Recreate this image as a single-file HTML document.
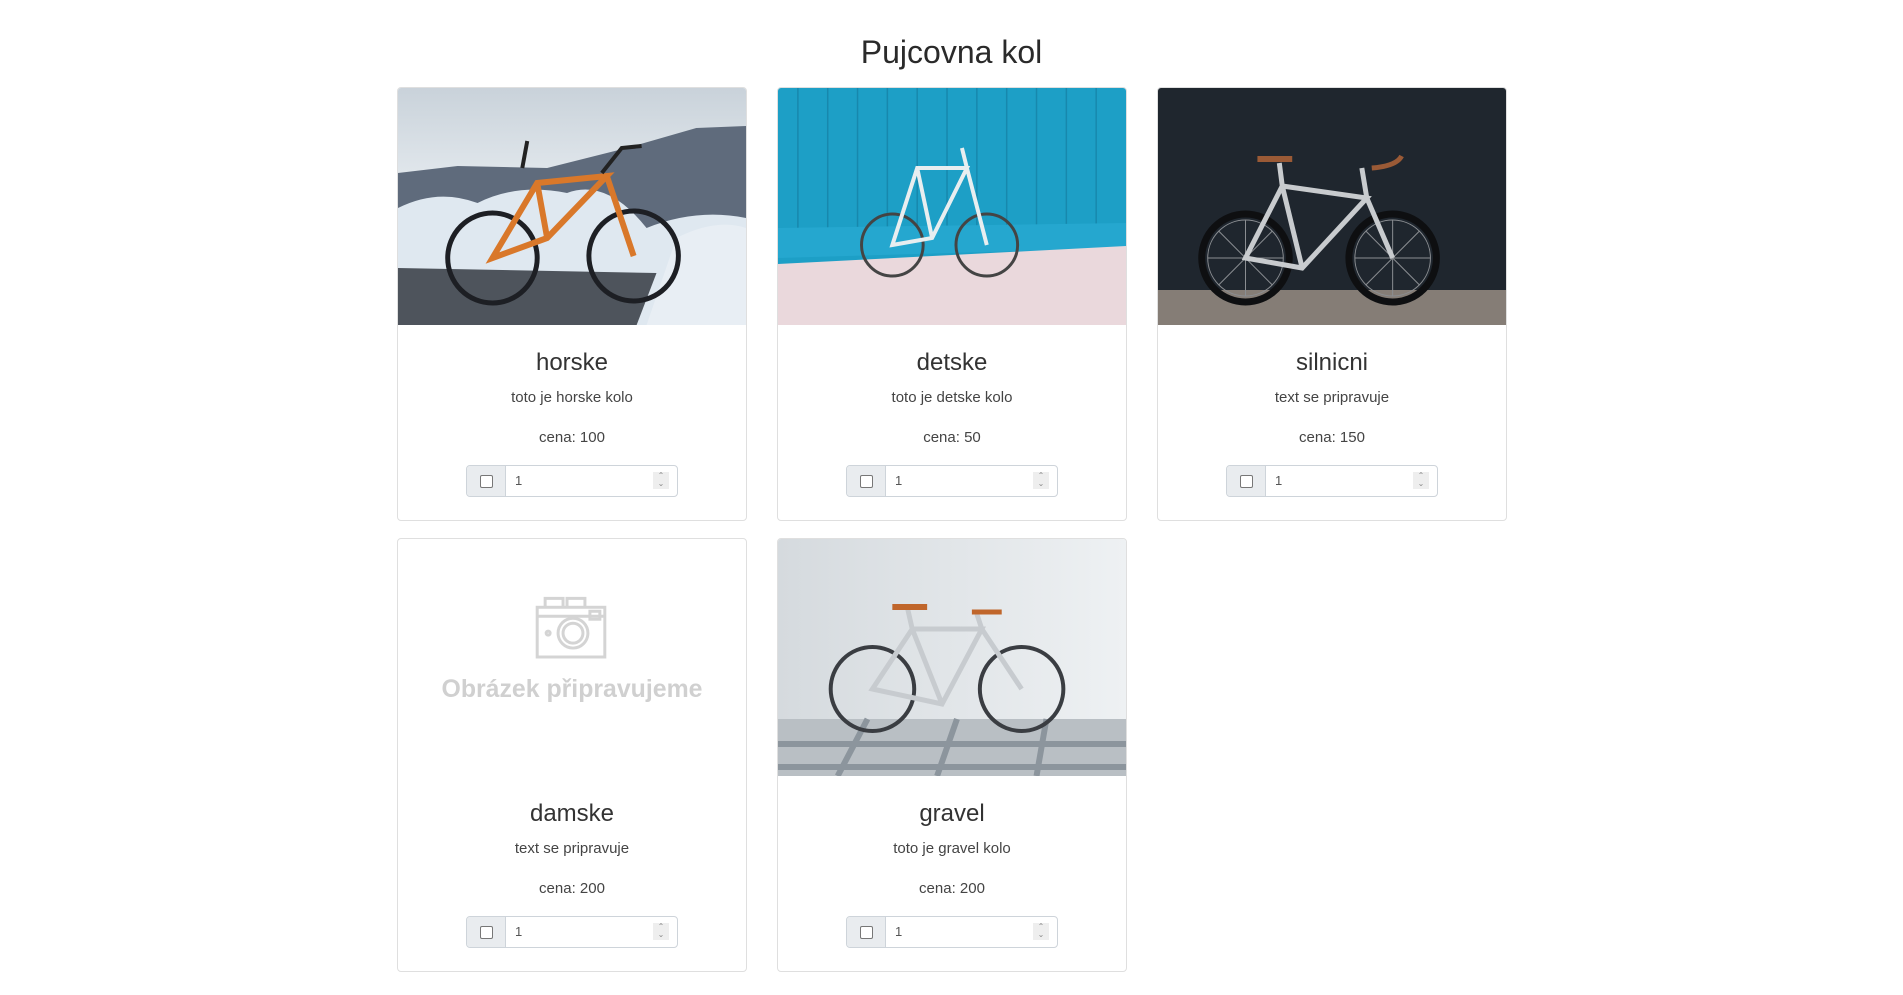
<!DOCTYPE html>
<html><head><meta charset="utf-8"><style>
*{box-sizing:border-box;margin:0;padding:0}
body{width:1903px;height:995px;background:#fff;font-family:"Liberation Sans",sans-serif;color:#212529;position:relative;overflow:hidden}
h1{position:absolute;left:0;width:1903px;top:31px;text-align:center;font-weight:400;font-size:32px;line-height:42px;color:#2a2a2a}
.card{position:absolute;width:350px;height:434px;border:1px solid #dfdfdf;border-radius:4px;overflow:hidden;background:#fff}
.img{position:absolute;left:0;top:0;width:348px;height:237px;display:block}
.nm{position:absolute;left:0;right:0;top:259px;text-align:center;font-size:24px;line-height:32px;color:#333}
.ds{position:absolute;left:0;right:0;top:300px;text-align:center;font-size:15px;line-height:20px;color:#444}
.pr{position:absolute;left:0;right:0;top:340px;text-align:center;font-size:15px;line-height:20px;color:#444}
.ig{position:absolute;left:68px;top:377px;width:212px;height:32px;border:1px solid #ced4da;border-radius:4px;overflow:hidden}
.pp{position:absolute;left:0;top:0;width:39px;height:30px;background:#e9ecef;border-right:1px solid #ced4da}
.pp i{position:absolute;left:13px;top:9px;width:13px;height:13px;border:1.5px solid #777;border-radius:2px;background:#fff}
.v{position:absolute;left:48px;top:7px;font-size:13px;color:#555}
.sp{position:absolute;right:8px;top:6px;width:16px;height:17px;background:#eee;font-size:8px;line-height:8px;text-align:center;color:#888}
</style></head><body>
<h1>Pujcovna kol</h1>

<div class="card" style="left:397px;top:87px">
<svg class="img" viewBox="0 0 350 237" preserveAspectRatio="none">
<defs><linearGradient id="s1" x1="0" y1="0" x2="0" y2="1"><stop offset="0" stop-color="#c9d2da"/><stop offset=".5" stop-color="#e9eef2"/><stop offset="1" stop-color="#aab6c2"/></linearGradient></defs>
<rect width="350" height="237" fill="url(#s1)"/>
<path d="M0 85 L60 78 L150 80 L230 60 L300 40 L350 38 L350 150 L0 150Z" fill="#5f6b7c"/>
<path d="M0 120 Q40 100 80 115 Q120 95 170 105 Q210 90 250 140 Q300 120 350 130 L350 237 L0 237Z" fill="#dfe8f0"/>
<path d="M0 180 L260 185 L240 237 L0 237Z" fill="#4e545c"/>
<path d="M280 150 Q320 130 350 140 L350 237 L250 237Z" fill="#e8eef4"/>
<g fill="none" stroke="#1d1f24" stroke-width="5"><circle cx="95" cy="170" r="45"/><circle cx="237" cy="168" r="45"/></g>
<g fill="none" stroke="#d9782a" stroke-width="6"><path d="M95 170 L150 150 L210 88 L140 95 Z M140 95 L150 150 M210 88 L237 168"/></g>
<path d="M130 53 L125 80" stroke="#222" stroke-width="4"/><path d="M205 85 L225 60 L245 58" stroke="#222" stroke-width="4" fill="none"/>
</svg>
<div class="nm">horske</div><div class="ds">toto je horske kolo</div><div class="pr">cena: 100</div>
<div class="ig"><div class="pp"><i></i></div><span class="v">1</span><div class="sp">⌃<br>⌄</div></div>
</div>

<div class="card" style="left:777px;top:87px">
<svg class="img" viewBox="0 0 350 237" preserveAspectRatio="none">
<rect width="350" height="237" fill="#1d9fc6"/>
<g stroke="#1788ad" stroke-width="1.5"><path d="M20 0V160M50 0V160M80 0V160M110 0V160M140 0V160M170 0V160M200 0V160M230 0V160M260 0V160M290 0V160M320 0V160"/></g>
<path d="M0 140 L350 135 L350 160 L0 170Z" fill="#25a7cf"/>
<path d="M0 176 L350 158 L350 237 L0 237Z" fill="#ead8dc"/>
<g fill="none" stroke="#444" stroke-width="3"><circle cx="115" cy="157" r="31"/><circle cx="210" cy="157" r="31"/></g>
<g fill="none" stroke="#e8eef0" stroke-width="4"><path d="M115 157 L155 150 L190 80 L140 80 Z M140 80 L155 150 M190 80 L210 157 M190 80 L185 60"/></g>
</svg>
<div class="nm">detske</div><div class="ds">toto je detske kolo</div><div class="pr">cena: 50</div>
<div class="ig"><div class="pp"><i></i></div><span class="v">1</span><div class="sp">⌃<br>⌄</div></div>
</div>

<div class="card" style="left:1157px;top:87px">
<svg class="img" viewBox="0 0 350 237" preserveAspectRatio="none">
<rect width="350" height="237" fill="#1f262e"/>
<rect y="202" width="350" height="35" fill="#857d76"/>
<g fill="none" stroke="#0e0f11" stroke-width="7"><circle cx="88" cy="170" r="44"/><circle cx="236" cy="170" r="44"/></g>
<g fill="none" stroke="#8b8e92" stroke-width="1"><circle cx="88" cy="170" r="38"/><circle cx="236" cy="170" r="38"/><path d="M50 170H126M88 132V208M61 143L115 197M115 143L61 197M198 170H274M236 132V208M209 143L263 197M263 143L209 197"/></g>
<g fill="none" stroke="#c8cbce" stroke-width="5"><path d="M88 170 L145 180 L210 110 L125 98 Z M125 98 L145 180 M210 110 L236 170 M122 75 L125 98 M205 80 L210 110"/></g>
<path d="M100 71 H135" stroke="#9a5a36" stroke-width="6"/><path d="M215 80 Q240 78 245 68" stroke="#9a5a36" stroke-width="5" fill="none"/>
</svg>
<div class="nm">silnicni</div><div class="ds">text se pripravuje</div><div class="pr">cena: 150</div>
<div class="ig"><div class="pp"><i></i></div><span class="v">1</span><div class="sp">⌃<br>⌄</div></div>
</div>

<div class="card" style="left:397px;top:538px">
<svg class="img" viewBox="0 0 350 237">
<g fill="none" stroke="#d4d4d4" stroke-width="3"><rect x="140" y="68" width="68" height="50"/><path d="M140 77H208M148 68V59H166V68M170 68V59H188V68"/><circle cx="176" cy="94" r="15"/><circle cx="176" cy="94" r="10"/><rect x="193" y="72" width="10" height="8"/><circle cx="151" cy="94" r="2"/></g>
<text x="175" y="158" text-anchor="middle" font-family="Liberation Sans,sans-serif" font-weight="bold" font-size="25" fill="#d0d0d0">Obrázek připravujeme</text>
</svg>
<div class="nm">damske</div><div class="ds">text se pripravuje</div><div class="pr">cena: 200</div>
<div class="ig"><div class="pp"><i></i></div><span class="v">1</span><div class="sp">⌃<br>⌄</div></div>
</div>

<div class="card" style="left:777px;top:538px">
<svg class="img" viewBox="0 0 350 237" preserveAspectRatio="none">
<defs><linearGradient id="w5" x1="0" y1="0" x2="1" y2="0"><stop offset="0" stop-color="#d5dade"/><stop offset="1" stop-color="#eef1f3"/></linearGradient></defs>
<rect width="350" height="237" fill="url(#w5)"/>
<rect y="180" width="350" height="57" fill="#b9bfc4"/>
<g stroke="#8c959d" stroke-width="6"><path d="M0 205H350M0 228H350M90 180L60 237M180 180L160 237M270 180L260 237"/></g>
<g fill="none" stroke="#3a3d42" stroke-width="4"><circle cx="95" cy="150" r="42"/><circle cx="245" cy="150" r="42"/></g>
<g fill="none" stroke="#c7cbcf" stroke-width="5"><path d="M95 150 L165 165 L205 90 L135 90 Z M135 90 L165 165 M205 90 L245 150 M130 68 L135 90 M200 75 L205 90"/></g>
<path d="M115 68 H150" stroke="#c0662b" stroke-width="6"/><path d="M195 73 H225" stroke="#c0662b" stroke-width="5"/>
</svg>
<div class="nm">gravel</div><div class="ds">toto je gravel kolo</div><div class="pr">cena: 200</div>
<div class="ig"><div class="pp"><i></i></div><span class="v">1</span><div class="sp">⌃<br>⌄</div></div>
</div>
</body></html>
